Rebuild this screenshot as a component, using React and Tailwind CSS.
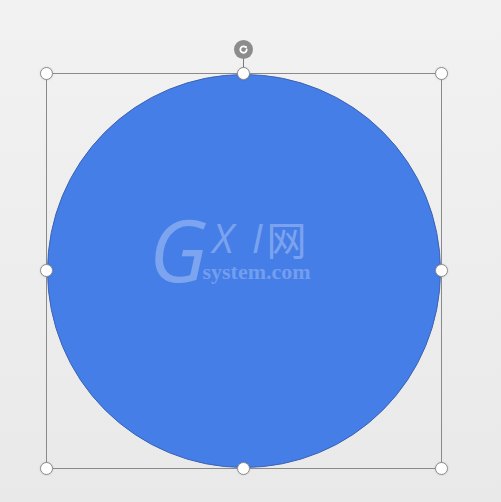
import React from 'react';

const Handle = ({ className }) => (
  <div
    className={`absolute w-[13px] h-[13px] rounded-full bg-white border border-[#8c8c8c] shadow-[0_0_2px_rgba(0,0,0,0.15)] ${className}`}
  />
);

export default function App() {
  return (
    <div className="w-[501px] h-[502px] bg-gradient-to-b from-[#f2f2f2] to-[#e9e9e9] pl-[46px] pt-[73px] overflow-hidden">
      <div className="relative w-[396px] h-[396px] border border-[#8a8a8a]">
        {/* shape */}
        <div className="absolute inset-0 rounded-full bg-[#467ee8] border border-[#3b63b3]" />

        {/* watermark */}
        <div className="absolute left-[102px] top-[142px] flex items-start text-white/30 select-none">
          <span className="text-[86px] leading-none italic font-normal -mt-[10px] tracking-[-4px]" style={{ fontFamily: '"Open Sans", sans-serif' }}>
            G
          </span>
          <div className="flex flex-col ml-[9px] mt-[2px]">
            <div className="flex items-center">
              <span className="text-[40px] leading-none italic tracking-[4px]" style={{ fontFamily: '"Open Sans", sans-serif' }}>
                X I
              </span>
              <span className="text-[40px] leading-none" style={{ fontFamily: '"Noto Sans CJK SC", sans-serif' }}>
                网
              </span>
            </div>
            <span className="text-[22px] leading-none font-bold -ml-[10px] mt-[3px] text-white/25" style={{ fontFamily: '"Liberation Serif", serif' }}>
              system.com
            </span>
          </div>
        </div>

        {/* rotation handle */}
        <div className="absolute left-[196px] top-[-16px] w-px h-[16px] bg-[#7a7a7a]" />
        <div className="absolute left-[187px] top-[-34px] w-[19px] h-[19px] rounded-full bg-[#8c8c8c] flex items-center justify-center">
          <svg width="11" height="11" viewBox="0 0 12 12" fill="none">
            <path d="M9.5 6a3.5 3.5 0 1 1-1.2-2.6" stroke="white" strokeWidth="2" strokeLinecap="round" />
            <path d="M7 1.8l2.8.6-.6 2.8z" fill="white" />
          </svg>
        </div>

        {/* resize handles */}
        <Handle className="left-[-7px] top-[-7px]" />
        <Handle className="left-[190px] top-[-7px]" />
        <Handle className="right-[-7px] top-[-7px]" />
        <Handle className="left-[-7px] top-[190px]" />
        <Handle className="right-[-7px] top-[190px]" />
        <Handle className="left-[-7px] bottom-[-7px]" />
        <Handle className="left-[190px] bottom-[-7px]" />
        <Handle className="right-[-7px] bottom-[-7px]" />
      </div>
    </div>
  );
}
